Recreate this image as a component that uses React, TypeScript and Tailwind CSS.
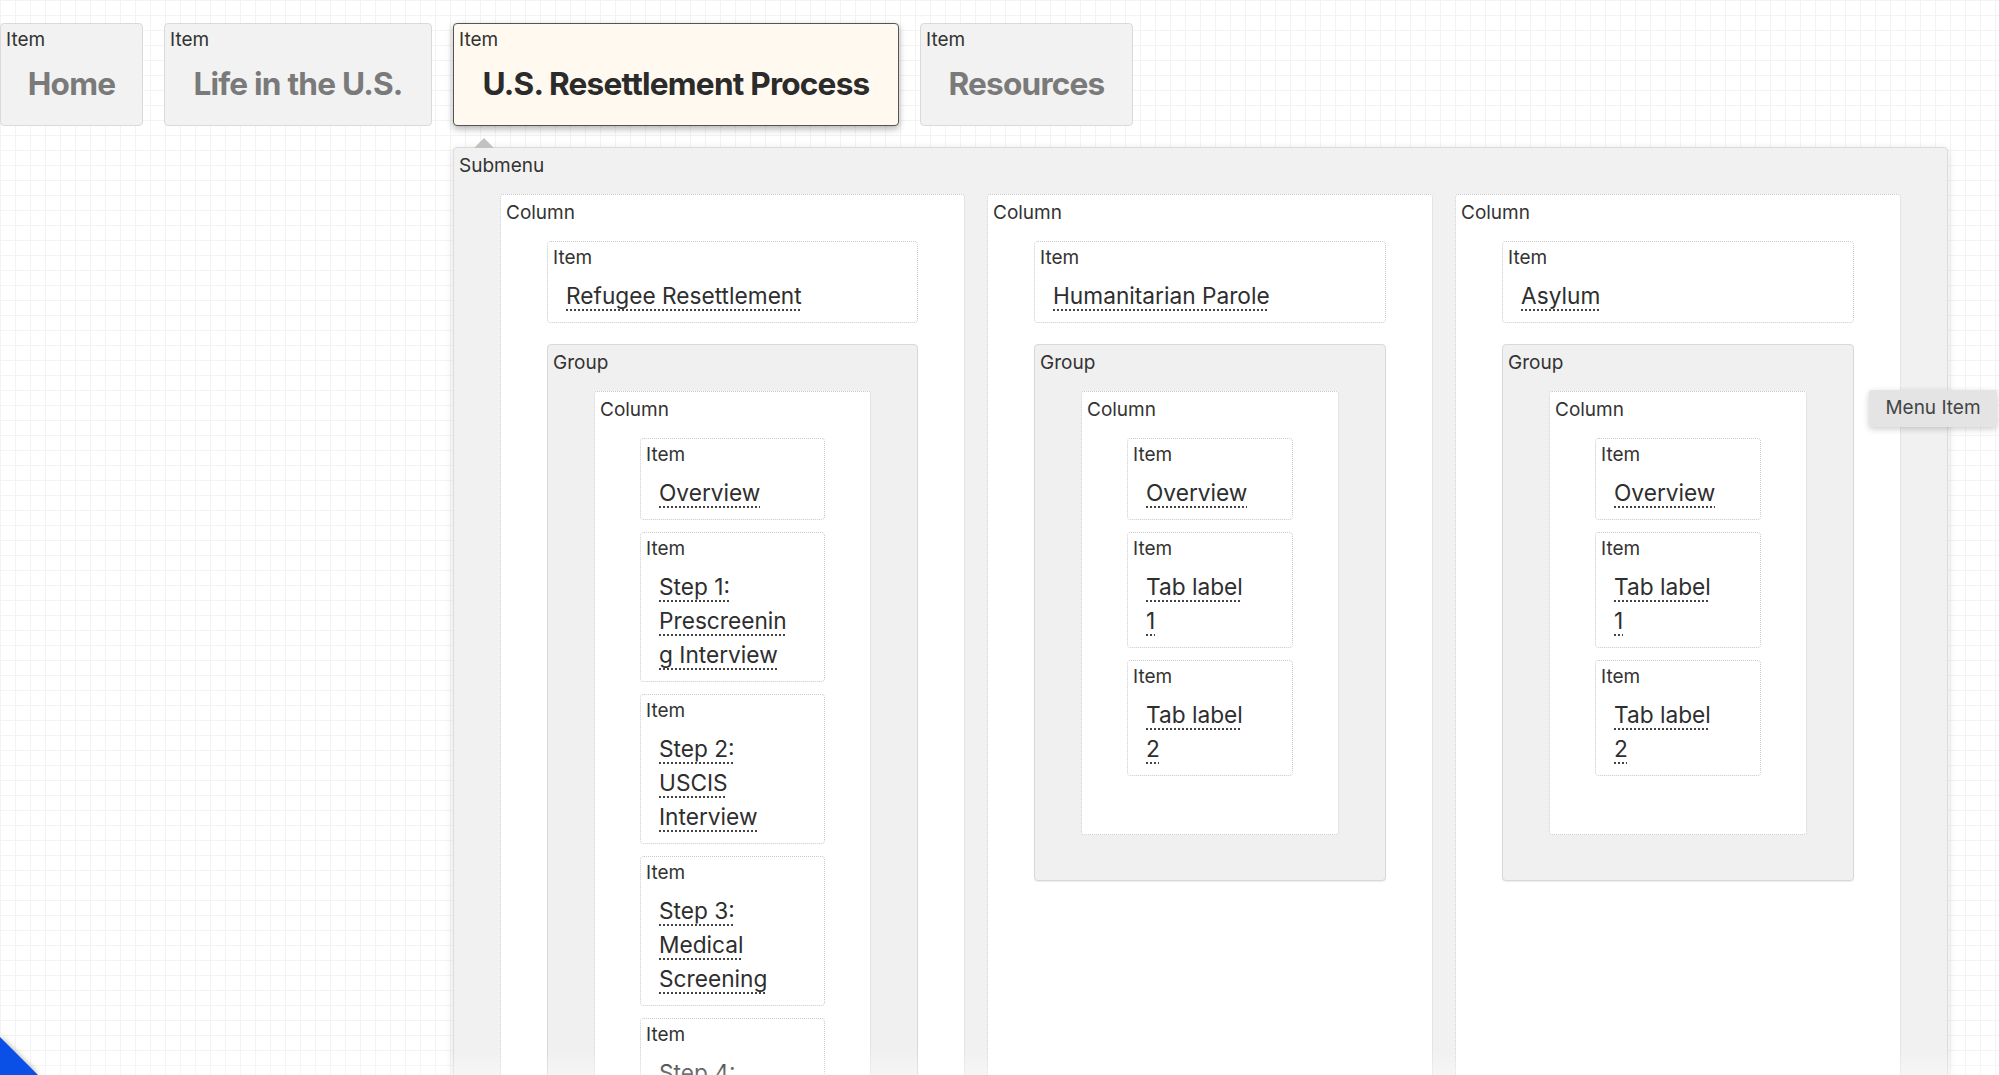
import React from "react";

type Kids = { children?: React.ReactNode };

function Label({ children }: Kids) {
  return <div className="h-[24px] text-[19px] leading-[24px] text-[#333] whitespace-nowrap">{children}</div>;
}

function Item({ text, w, wide }: { text: string; w?: string; wide?: boolean }) {
  return (
    <div className={`${w ?? ""} bg-white border border-dotted border-[#c9c9c9] rounded-[4px] pt-[4px] pb-[9px] pl-[5px]`}>
      <Label>Item</Label>
      <div className={`mt-[9px] ml-[13px] ${wide ? "" : "mr-[34px]"} text-[22.7px] leading-[34px] text-[#2e2e2e] break-words`}>
        <span className="underline decoration-dotted decoration-[#444] decoration-2 underline-offset-[5px]">{text}</span>
      </div>
    </div>
  );
}

function Column({ children, inset, pb, className }: Kids & { inset: "46" | "47"; pb?: string; className?: string }) {
  return (
    <div className={`bg-white border border-dotted border-[#c9c9c9] rounded-[3px] pt-[6px] px-[5px] ${pb ?? ""} ${className ?? ""}`}>
      <Label>Column</Label>
      <div className={`mt-[16px] flex flex-col items-stretch ${inset === "47" ? "mx-[41px] gap-[21px]" : "mx-[40px] gap-[12px]"}`}>
        {children}
      </div>
    </div>
  );
}

function Group({ children }: Kids) {
  return (
    <div className="bg-[#f0f0f0] border border-[#d9d9d9] rounded-[4px] shadow-[0_1px_1px_rgba(0,0,0,0.08)] pt-[6px] px-[5px] pb-[45px]">
      <Label>Group</Label>
      <div className="mt-[16px] mx-[41px] flex flex-col">{children}</div>
    </div>
  );
}

function TopItem({ label, w, active }: { label: string; w: string; active?: boolean }) {
  return (
    <div
      className={`${w} h-[103px] shrink-0 rounded-[4px] pt-[4px] px-[5px] ${
        active
          ? "bg-[#fff9ef] border-[1.5px] border-[#555] shadow-[0_3px_7px_rgba(0,0,0,0.3)] text-[#2b2b2b]"
          : "bg-[#f2f2f2] border border-[#dadada] text-[#7a7a7a]"
      }`}
    >
      <Label>Item</Label>
      <div className="mt-[12px] text-center text-[31.6px] leading-[40px] font-bold tracking-tight whitespace-nowrap">{label}</div>
    </div>
  );
}

export default function App() {
  const col1 = [
    "Overview",
    "Step 1: Prescreening Interview",
    "Step 2: USCIS Interview",
    "Step 3: Medical Screening",
    "Step 4: Cultural Orientation",
    "Step 5: Travel to the U.S.",
  ];
  const tabs = ["Overview", "Tab label 1", "Tab label 2"];

  return (
    <div className="relative h-[1075px] w-full overflow-hidden bg-white font-[Inter,sans-serif] bg-[linear-gradient(to_right,#f3f3f3_1px,transparent_1px),linear-gradient(to_bottom,#f3f3f3_1px,transparent_1px)] bg-[size:15px_15px]">
      <nav className="flex gap-[21px] pt-[23px]">
        <TopItem label="Home" w="w-[143px]" />
        <TopItem label="Life in the U.S." w="w-[268px]" />
        <TopItem label="U.S. Resettlement Process" w="w-[446px]" active />
        <TopItem label="Resources" w="w-[213px]" />
      </nav>

      <section className="relative mt-[21px] ml-[453px] w-[1495px] bg-[#f1f1f1] border border-[#dcdcdc] rounded-[4px] shadow-[0_2px_8px_rgba(0,0,0,0.12)] pt-[6px] px-[5px]">
        <svg className="absolute -top-[10px] left-[20px] w-[20px] h-[10px]" viewBox="0 0 20 10">
          <polygon points="10,0 20,10 0,10" fill="#c2c2c2" />
        </svg>
        <Label>Submenu</Label>
        <div className="mt-[16px] mx-[41px] flex gap-[22px]">
          <Column inset="47">
            <Item text="Refugee Resettlement" wide />
            <Group>
              <Column inset="46" pb="pb-[58px]">
                {col1.map((t) => (
                  <Item key={t} text={t} w="w-[185px]" />
                ))}
              </Column>
            </Group>
          </Column>
          {["Humanitarian Parole", "Asylum"].map((head) => (
            <Column key={head} inset="47">
              <Item text={head} wide />
              <Group>
                <Column inset="46" pb="pb-[58px]">
                  {tabs.map((t) => (
                    <Item key={t} text={t} w="w-[166px]" />
                  ))}
                </Column>
              </Group>
            </Column>
          ))}
        </div>
      </section>

      <div className="absolute left-[1869px] top-[390px] w-[128px] h-[37px] bg-[#e4e4e4] rounded-[3px] shadow-[0_2px_6px_rgba(0,0,0,0.2)] flex items-center justify-center text-[19px] text-[#444]">
        Menu Item
      </div>

      <div className="absolute bottom-0 inset-x-0 h-[24px] bg-linear-to-b from-transparent to-white/35"></div>

      <svg className="absolute bottom-0 left-0 w-[40px] h-[40px] drop-shadow-[0_0_3px_rgba(0,0,0,0.35)]" viewBox="0 0 40 40">
        <polygon points="0,2 38,40 0,40" fill="#0a50e6" />
      </svg>
    </div>
  );
}
